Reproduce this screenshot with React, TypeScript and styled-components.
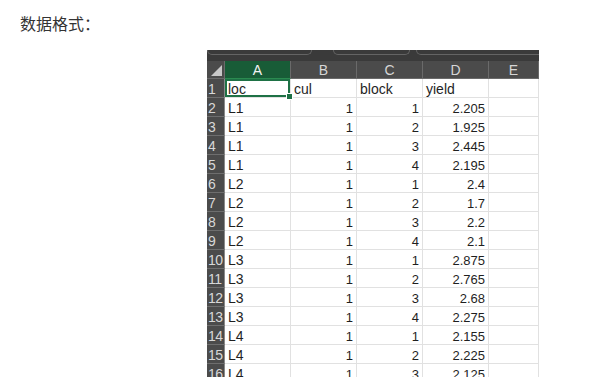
import React from 'react';
import styled, { createGlobalStyle } from 'styled-components';

const GlobalStyle = createGlobalStyle`
  html, body {
    margin: 0;
    padding: 0;
    background: #ffffff;
  }
  body {
    font-family: 'Noto Sans CJK SC', 'Liberation Sans', sans-serif;
  }
`;

const Page = styled.div`
  width: 601px;
  height: 390px;
  overflow: hidden;
  background: #fff;
`;

const Heading = styled.div`
  padding: 12px 0 0 20px;
  height: 26px;
  font-size: 16px;
  line-height: 22px;
  color: #333;
  font-family: 'Noto Sans CJK SC', sans-serif;
`;

const Sheet = styled.div`
  margin: 12px 0 0 207px;
  width: 332px;
  height: 327px;
  overflow: hidden;
  font-family: 'Liberation Sans', 'Noto Sans CJK SC', sans-serif;
`;

const Ribbon = styled.div`
  display: flex;
  height: 11px;
  background: #3a3a3a;
  gap: 6px;
`;

const RibbonTab = styled.div<{ $w: number; $gap?: number }>`
  flex: 0 0 ${p => p.$w}px;
  margin-left: ${p => p.$gap ?? 0}px;
  height: 4px;
  border: 1px solid #646464;
  border-top: none;
  border-radius: 0 0 5px 5px;
`;

const Grid = styled.div`
  display: grid;
  grid-template-columns: 18px repeat(4, 66px) 50px;
  grid-auto-rows: 19px;
  grid-template-rows: 18px;
`;

const Corner = styled.div`
  position: relative;
  background: #4b4b4b;
  border-right: 1px solid #6a6a6a;
  border-bottom: 1px solid #6a6a6a;
  &::after {
    content: '';
    position: absolute;
    right: 2px;
    bottom: 2px;
    width: 0;
    height: 0;
    border-left: 11px solid transparent;
    border-bottom: 11px solid #c8c8c8;
  }
`;

const ColHead = styled.div<{ $active?: boolean }>`
  background: ${p => (p.$active ? '#185c37' : '#4b4b4b')};
  color: ${p => (p.$active ? '#f2f2f2' : '#d6d6d6')};
  border-right: 1px solid #6a6a6a;
  border-bottom: 1px solid ${p => (p.$active ? '#2b8a50' : '#6a6a6a')};
  font-size: 14px;
  line-height: 19px;
  text-align: center;
`;

const RowHead = styled.div`
  background: #4b4b4b;
  color: #d8d8d8;
  border-bottom: 1px solid #6e6e6e;
  border-right: 1px solid #8a8a8a;
  font-size: 14px;
  padding: 2px 0 0 1px;
  line-height: 16px;
  white-space: nowrap;
  overflow: hidden;
  letter-spacing: -0.5px;
`;

const Cell = styled.div<{ $num?: boolean; $selected?: boolean }>`
  position: relative;
  border-right: 1px solid #e1e1e1;
  border-bottom: 1px solid #e1e1e1;
  font-size: ${p => (p.$num ? 13 : 14)}px;
  line-height: 15px;
  padding: 3px 3px 0;
  color: #1f1f1f;
  text-align: ${p => (p.$num ? 'right' : 'left')};
  white-space: nowrap;
  overflow: hidden;
  ${p =>
    p.$selected &&
    `
    overflow: visible;
    box-shadow: inset 0 0 0 2px #1e7145;
    z-index: 1;
    &::after {
      content: '';
      position: absolute;
      right: -3px;
      bottom: -3px;
      width: 5px;
      height: 5px;
      background: #1e7145;
      border: 1px solid #fff;
    }
  `}
`;

const header = ['loc', 'cul', 'block', 'yield'];

const rows: [string, number, number, string][] = [
  ['L1', 1, 1, '2.205'],
  ['L1', 1, 2, '1.925'],
  ['L1', 1, 3, '2.445'],
  ['L1', 1, 4, '2.195'],
  ['L2', 1, 1, '2.4'],
  ['L2', 1, 2, '1.7'],
  ['L2', 1, 3, '2.2'],
  ['L2', 1, 4, '2.1'],
  ['L3', 1, 1, '2.875'],
  ['L3', 1, 2, '2.765'],
  ['L3', 1, 3, '2.68'],
  ['L3', 1, 4, '2.275'],
  ['L4', 1, 1, '2.155'],
  ['L4', 1, 2, '2.225'],
  ['L4', 1, 3, '2.125'],
];

const App: React.FC = () => {
  return (
    <Page>
      <GlobalStyle />
      <Heading>数据格式：</Heading>
      <Sheet>
        <Ribbon>
          <RibbonTab $w={103} />
          <RibbonTab $w={75} $gap={15} />
          <RibbonTab $w={140} />
        </Ribbon>
        <Grid>
          <Corner />
          {['A', 'B', 'C', 'D', 'E'].map(c => (
            <ColHead key={c} $active={c === 'A'}>{c}</ColHead>
          ))}

          <RowHead>1</RowHead>
          {header.map((h, i) => (
            <Cell key={h} $selected={i === 0}>{h}</Cell>
          ))}
          <Cell />

          {rows.map((r, i) => (
            <React.Fragment key={i}>
              <RowHead>{i + 2}</RowHead>
              <Cell>{r[0]}</Cell>
              <Cell $num>{r[1]}</Cell>
              <Cell $num>{r[2]}</Cell>
              <Cell $num>{r[3]}</Cell>
              <Cell />
            </React.Fragment>
          ))}
        </Grid>
      </Sheet>
    </Page>
  );
};

export default App;
